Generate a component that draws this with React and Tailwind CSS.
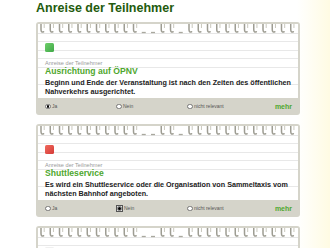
import React from "react";

const font = { fontFamily: '"Liberation Sans", Arial, sans-serif' };

function Spiral() {
  const period = 9.25;
  const items = [];
  for (let i = 0; i < 28; i++) {
    const x = 3 + i * period;
    if (x > 258) break;
    const flat = i === 11 || i === 12 || i === 15;
    if (flat) {
      items.push(
        <path key={i} d={`M${x - 1} 8.5 L${x + 3} 8.5`} stroke="#a9a89e" strokeWidth="1.3" fill="none" />
      );
    } else {
      items.push(
        <g key={i}>
          <path
            d={`M${x} 0 L${x} 5.5 Q${x} 8.8 ${x + 2.6} 7.8`}
            stroke="#9e9d93"
            strokeWidth="1.5"
            fill="none"
            strokeLinecap="round"
          />
          <path
            d={`M${x + 3.2} 0 L${x + 3.2} 4`}
            stroke="#c9c8be"
            strokeWidth="1"
            fill="none"
          />
        </g>
      );
    }
  }
  return (
    <svg width="260" height="10" viewBox="0 0 260 10" className="block">
      {items}
    </svg>
  );
}

function Radio({ checked, focus, label }) {
  return (
    <div className="flex items-center gap-[1px]">
      <div
        className={
          focus
            ? "flex h-[7px] w-[7px] items-center justify-center border border-[#555] bg-[#e0e0e0]"
            : "flex h-[6px] w-[6px] items-center justify-center"
        }
      >
        <div className="flex h-[5.5px] w-[5.5px] items-center justify-center rounded-full border-[0.7px] border-[#777] bg-white">
          {checked && <div className="h-[2.5px] w-[2.5px] rounded-full bg-black" />}
        </div>
      </div>
      <span className="text-[5px] leading-none text-[#555]">{label}</span>
    </div>
  );
}

function Card({ color, title, desc, selected, focusNein, empty }) {
  return (
    <div className="w-[264px] rounded-[3px] bg-[#d5d4ca] px-[2px] pt-[2px]">
      <div className="bg-white">
        <div className="h-[10px] border-b border-[#e6e6e6]">
          <Spiral />
        </div>
        <div className="bg-[repeating-linear-gradient(to_bottom,#fff_0px,#fff_7.5px,#e8e8e8_7.5px,#e8e8e8_8.5px)] pb-[2px] pl-[7px] pr-[6px] pt-[9px]">
          <div className={`h-[9px] w-[9px] rounded-[1.5px] ${color}`} />
          {!empty && (
            <>
              <div className="mt-[8px] text-[5.6px] leading-[6px] text-[#9a9a9a]">Anreise der Teilnehmer</div>
              <div className="text-[8.6px] font-bold leading-[10px] text-[#4ea72e]">{title}</div>
              <div className="mt-[3px] text-[7.2px] font-bold leading-[8.5px] text-[#222]">{desc}</div>
            </>
          )}
        </div>
      </div>
      {!empty && (
        <div className="flex h-[17px] items-center pl-[7px] pr-[6px]">
          <div className="w-[71px]">
            <Radio checked={selected === "ja"} label="Ja" />
          </div>
          <div className="w-[71px]">
            <Radio checked={selected === "nein"} focus={focusNein} label="Nein" />
          </div>
          <div className="flex-1">
            <Radio checked={selected === "nr"} label="nicht relevant" />
          </div>
          <span className="text-[7px] font-bold leading-none text-[#4ea72e]">mehr</span>
        </div>
      )}
    </div>
  );
}

export default function App() {
  return (
    <div
      className="h-[248px] w-[330px] overflow-hidden bg-[linear-gradient(to_right,#ffffff_0%,#ffffff_90%,#fffbe3_100%)] pl-[36px]"
      style={font}
    >
      <h1 className="pt-[1px] text-[12.5px] font-bold leading-[15px] text-[#235b0d]">Anreise der Teilnehmer</h1>
      <div className="mt-[6px] flex flex-col gap-[9px]">
        <Card
          color="bg-[linear-gradient(135deg,#6fcf6a,#3fa848)]"
          title="Ausrichtung auf ÖPNV"
          desc={<>Beginn und Ende der Veranstaltung ist nach den Zeiten des öffentlichen<br />Nahverkehrs ausgerichtet.</>}
          selected="ja"
        />
        <Card
          color="bg-[linear-gradient(135deg,#f06a5e,#d43a36)]"
          title="Shuttleservice"
          desc={<>Es wird ein Shuttleservice oder die Organisation von Sammeltaxis vom<br />nächsten Bahnhof angeboten.</>}
          selected="nein"
          focusNein
        />
        <Card color="bg-[#f0f0f0]" empty />
      </div>
    </div>
  );
}
